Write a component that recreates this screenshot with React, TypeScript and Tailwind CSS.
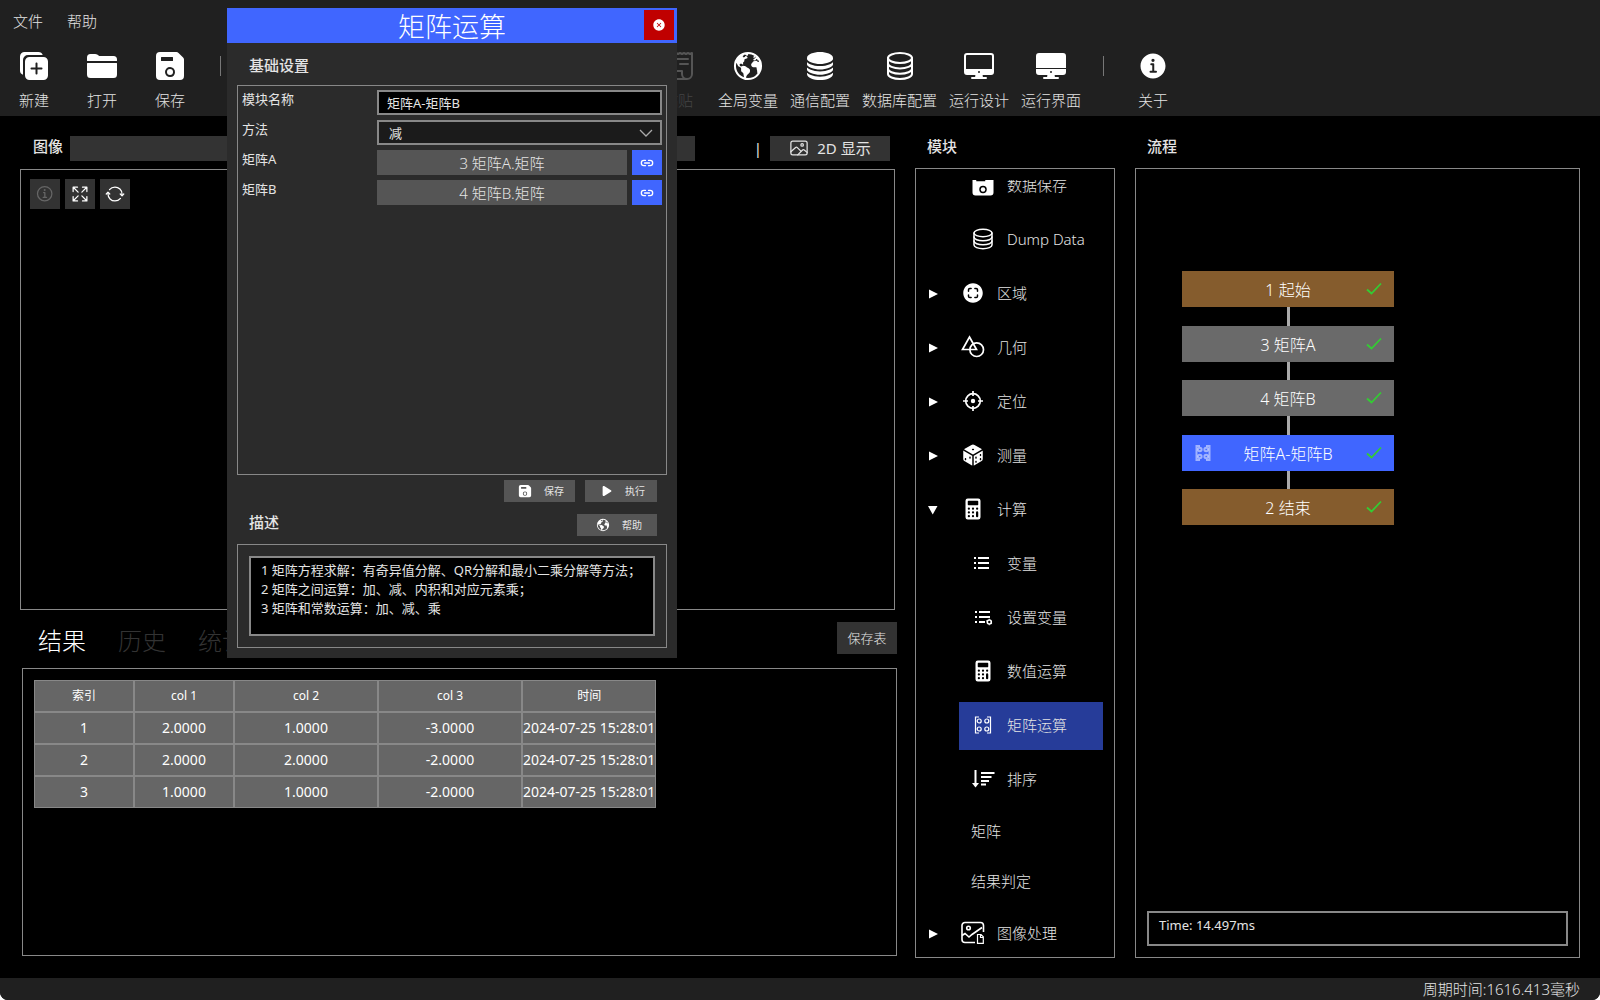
import React, { useState } from 'react';
import {
  IoCalculator,
  IoCloseCircle,
  IoDesktop,
  IoDesktopOutline,
  IoDice,
  IoDuplicate,
  IoEarth,
  IoExpandOutline,
  IoFolder,
  IoImageOutline,
  IoInformationCircle,
  IoInformationCircleOutline,
  IoLink,
  IoPlay,
  IoReceiptOutline,
  IoSave,
  IoScanCircle,
  IoServer,
  IoServerOutline,
  IoSyncOutline,
} from 'react-icons/io5';

type IconType = React.ComponentType<{ className?: string }>;

/* ---------- Icons ---------- */

const ShapesIcon: IconType = ({ className }) => (
  <svg viewBox="0 0 24 24" fill="none" stroke="currentColor" strokeWidth="1.7" className={className}>
    <path d="M8.5 2 L15.5 14.500 H1.5 Z" />
    <circle cx="15.7" cy="14.7" r="6.8" />
  </svg>
);

const TargetIcon: IconType = ({ className }) => (
  <svg viewBox="0 0 24 24" fill="none" stroke="currentColor" strokeWidth="1.7" className={className}>
    <circle cx="12" cy="12" r="7.3" />
    <path d="M12 2v5M12 17v5M2 12h5M17 12h5" />
    <circle cx="12" cy="12" r="2.2" fill="currentColor" stroke="none" />
  </svg>
);

const ListIcon: IconType = ({ className }) => (
  <svg viewBox="0 0 24 24" fill="currentColor" className={className}>
    <path d="M3 6h2v2H3zM3 11h2v2H3zM3 16h2v2H3zM7 6h11v2H7zM7 11h11v2H7zM7 16h11v2H7z" />
  </svg>
);

const ListSettingIcon: IconType = ({ className }) => (
  <svg viewBox="0 0 24 24" fill="currentColor" className={className}>
    <path d="M4 6h2v2H4zM4 11h2v2H4zM4 16h2v2H4zM8 6h11v2H8zM8 11h11v2H8zM8 16h6v2H8z" />
    <circle cx="18.3" cy="17" r="2" fill="none" stroke="currentColor" strokeWidth="1.6" />
    <path d="M17.8 13.8h1v1h-1zM17.8 19.2h1v1h-1zM15.4 15.2l.9.5-.4.7-.9-.5zM20.3 18l.9.5-.4.7-.9-.5z" />
  </svg>
);

const MatrixIcon: IconType = ({ className }) => (
  <svg viewBox="0 0 24 24" fill="none" stroke="currentColor" strokeWidth="1.2" className={className}>
    <path d="M8 4H4.500v16H8M16 4h3.500v16H16" />
    <circle cx="8.200" cy="8" r="2" />
    <circle cx="15.800" cy="8" r="2" />
    <circle cx="8.200" cy="16" r="2" />
    <circle cx="15.800" cy="16" r="2" />
  </svg>
);

/* Heavier variant used inside the flow nodes */
const MatrixBoldIcon: IconType = ({ className }) => (
  <svg viewBox="0 0 24 24" fill="none" stroke="currentColor" strokeWidth="2" className={className}>
    <path d="M9 5H5.500v14H9M15 5h3.500v14H15" />
    <circle cx="8.800" cy="8.500" r="1.800" />
    <circle cx="15.200" cy="8.500" r="1.800" />
    <circle cx="8.800" cy="15.500" r="1.800" />
    <circle cx="15.200" cy="15.500" r="1.800" />
  </svg>
);

const SortIcon: IconType = ({ className }) => (
  <svg viewBox="0 0 24 24" fill="none" stroke="currentColor" strokeWidth="2" className={className}>
    <path d="M4.500 3v15" />
    <path d="M1 16h7l-3.500 4.500z" fill="currentColor" stroke="none" />
    <path d="M10 6h13.500M10 10h10.500M10 14h8M10 17.500h5" />
  </svg>
);

const ImageProcessIcon: IconType = ({ className }) => (
  <svg viewBox="0 0 24 24" fill="none" stroke="currentColor" strokeWidth="1.6" className={className}>
    <path d="M14 21.500H4A3 3 0 0 1 1 18.500V4.500A3 3 0 0 1 4 1.500H19.500A3 3 0 0 1 22.500 4.500V11" />
    <circle cx="7.500" cy="7" r="1.800" />
    <path d="M1 14.500l3-2 4 3.500 3-2.500 10-7" />
    <path d="M16.500 13.500h3.500l2.300 2.300v6.500h-5.800zM19.500 13.500v3h2.800" strokeWidth="1.200" />
  </svg>
);

const CheckIcon: IconType = ({ className }) => (
  <svg viewBox="0 0 16 14" fill="none" stroke="currentColor" strokeWidth="1.800" className={className}>
    <path d="M1 7.500l4.500 4L15 1.500" />
  </svg>
);

const ChevronIcon: IconType = ({ className }) => (
  <svg viewBox="0 0 14 8" fill="none" stroke="currentColor" strokeWidth="1.300" className={className}>
    <path d="M1 1l6 6 6-6" />
  </svg>
);

/* ---------- Data ---------- */

interface Tool {
  label: string;
  icon: IconType;
  disabled?: boolean;
}

const fileTools: Tool[] = [
  { label: '新建', icon: IoDuplicate },
  { label: '打开', icon: IoFolder },
  { label: '保存', icon: IoSave },
];

const projectTools: Tool[] = [
  { label: '粘贴', icon: IoReceiptOutline, disabled: true },
  { label: '全局变量', icon: IoEarth },
  { label: '通信配置', icon: IoServer },
  { label: '数据库配置', icon: IoServerOutline },
  { label: '运行设计', icon: IoDesktopOutline },
  { label: '运行界面', icon: IoDesktop },
];

interface TreeItem {
  label: string;
  icon?: IconType;
  group?: boolean;
  open?: boolean;
}

const treeItems: TreeItem[] = [
  { label: '数据保存', icon: IoSave },
  { label: 'Dump Data', icon: IoServerOutline },
  { label: '区域', icon: IoScanCircle, group: true },
  { label: '几何', icon: ShapesIcon, group: true },
  { label: '定位', icon: TargetIcon, group: true },
  { label: '测量', icon: IoDice, group: true },
  { label: '计算', icon: IoCalculator, group: true, open: true },
  { label: '变量', icon: ListIcon },
  { label: '设置变量', icon: ListSettingIcon },
  { label: '数值运算', icon: IoCalculator },
  { label: '矩阵运算', icon: MatrixIcon },
  { label: '排序', icon: SortIcon },
  { label: '矩阵' },
  { label: '结果判定' },
  { label: '图像处理', icon: ImageProcessIcon, group: true },
];

const flowNodes = [
  { label: '1 起始', color: 'bg-[#855c2d]' },
  { label: '3 矩阵A', color: 'bg-[#6a6a6a]' },
  { label: '4 矩阵B', color: 'bg-[#6a6a6a]' },
  { label: '矩阵A-矩阵B', color: 'bg-[#4066ff]', active: true },
  { label: '2 结束', color: 'bg-[#855c2d]' },
];

const columns = [
  { title: '索引', width: 'w-[100px]' },
  { title: 'col 1', width: 'w-[100px]' },
  { title: 'col 2', width: 'w-[144px]' },
  { title: 'col 3', width: 'w-[144px]' },
  { title: '时间', width: 'w-[134px]' },
];

const rows = [
  ['1', '2.0000', '1.0000', '-3.0000', '2024-07-25 15:28:01'],
  ['2', '2.0000', '2.0000', '-2.0000', '2024-07-25 15:28:01'],
  ['3', '1.0000', '1.0000', '-2.0000', '2024-07-25 15:28:01'],
];

const description = `1 矩阵方程求解：有奇异值分解、QR分解和最小二乘分解等方法；
2 矩阵之间运算：加、减、内积和对应元素乘；
3 矩阵和常数运算：加、减、乘`;

/* ---------- Header ---------- */

const ToolButton: React.FC<{ tool: Tool }> = ({ tool }) => {
  const Icon = tool.icon;
  return (
    <button
      disabled={tool.disabled}
      className="flex min-w-14 shrink-0 flex-col items-center gap-2 disabled:text-[#444]"
    >
      <Icon className={`h-8 w-8 ${tool.disabled ? 'text-[#555]' : 'text-white'}`} />
      <span className="leading-5">{tool.label}</span>
    </button>
  );
};

const Header: React.FC = () => (
  <header className="h-[116px] overflow-hidden bg-[#202020] font-light">
    <nav className="flex h-[42px] items-center gap-6 px-[13px]">
      <button>文件</button>
      <button>帮助</button>
    </nav>
    <div className="flex items-start pl-[6px] pt-2">
      <div className="flex gap-3">
        {fileTools.map((tool) => (
          <ToolButton key={tool.label} tool={tool} />
        ))}
      </div>
      <div className="ml-[22px] mt-[6px] h-5 w-px shrink-0 bg-[#777]" />
      <div className="ml-[429px] flex gap-3">
        {projectTools.map((tool) => (
          <ToolButton key={tool.label} tool={tool} />
        ))}
      </div>
      <div className="ml-[22px] mr-[21px] mt-[6px] h-5 w-px shrink-0 bg-[#777]" />
      <ToolButton tool={{ label: '关于', icon: IoInformationCircle }} />
    </div>
  </header>
);

/* ---------- Image + results ---------- */

const ImagePanel: React.FC = () => (
  <section className="mr-[2px]">
    <div className="flex h-[53px] items-center pl-[13px] pr-[5px] pt-[11px]">
      <label htmlFor="image-source" className="mb-1 w-[37px] font-medium">图像</label>
      <input id="image-source" readOnly className="h-[25px] w-[625px] bg-[#333] px-2 outline-none" />
      <span className="ml-auto mr-2">|</span>
      <button className="flex h-[25px] w-[120px] items-center justify-center gap-2 bg-[#333]">
        <IoImageOutline className="h-5 w-5" />
        2D 显示
      </button>
    </div>
    <div className="flex h-[441px] items-start gap-[5px] border border-[#888] p-[9px]">
      <button disabled aria-label="信息" className="flex h-[30px] w-[30px] items-center justify-center bg-[#333] text-[#666]">
        <IoInformationCircleOutline className="h-5 w-5" />
      </button>
      <button aria-label="适应窗口" className="flex h-[30px] w-[30px] items-center justify-center bg-[#333] text-white">
        <IoExpandOutline className="h-5 w-5" />
      </button>
      <button aria-label="刷新" className="flex h-[30px] w-[30px] items-center justify-center bg-[#333] text-white">
        <IoSyncOutline className="h-5 w-5" />
      </button>
    </div>
  </section>
);

const ResultPanel: React.FC = () => {
  const [tab, setTab] = useState('结果');

  return (
    <section className="mb-[2px] ml-[2px] flex flex-1 flex-col">
      <div className="flex h-[58px] items-center justify-between">
        <div className="flex pt-1 text-2xl font-light">
          {['结果', '历史', '统计'].map((name) => (
            <button
              key={name}
              onClick={() => setTab(name)}
              className={`w-20 text-center ${tab === name ? 'text-white' : 'text-[#333]'}`}
            >
              {name}
            </button>
          ))}
        </div>
        <button className="mb-[2px] h-8 w-[60px] bg-[#333] text-[13px] font-light">保存表</button>
      </div>
      <div className="flex-1 border border-[#888] p-[11px]">
        <table className="table-fixed border-separate border-spacing-0 bg-[#666] text-center text-white">
          <thead>
            <tr className="h-8">
              {columns.map((col) => (
                <th key={col.title} className={`${col.width} border border-[#888] p-0 text-xs font-normal`}>
                  {col.title}
                </th>
              ))}
            </tr>
          </thead>
          <tbody>
            {rows.map((row) => (
              <tr key={row[0]} className="h-8">
                {row.map((cell, i) => (
                  <td key={i} className="whitespace-nowrap border border-[#888] p-0 text-sm">
                    {cell}
                  </td>
                ))}
              </tr>
            ))}
          </tbody>
        </table>
      </div>
    </section>
  );
};

/* ---------- Module tree ---------- */

const ModuleTree: React.FC = () => {
  const [selected, setSelected] = useState('矩阵运算');

  return (
    <section className="ml-[18px] flex w-[200px] shrink-0 flex-col">
      <h2 className="h-[52px] pl-3 pt-5 font-medium">模块</h2>
      <div className="h-[790px] border border-[#888] p-[11px] font-light">
        <div className="h-full overflow-hidden">
          {/* List is scrolled part of a row down */}
          <ul className="-mt-[18px] flex flex-col gap-[6px]">
            {treeItems.map((item) => {
              const Icon = item.icon;
              return (
                <li key={item.label} className={`flex shrink-0 items-center ${item.group ? '' : 'pl-8'}`}>
                  {item.group && (
                    <svg viewBox="0 0 22 12" className="h-3 w-[22px] text-white" fill="currentColor">
                      <path d={item.open ? 'M1 2h9.500L5.700 10.500z' : 'M2 1.500v9l9-4.500z'} />
                    </svg>
                  )}
                  <button
                    onClick={() => setSelected(item.label)}
                    className={`flex flex-1 items-center gap-3 px-3 pb-[2px] text-left ${Icon ? 'h-12' : 'h-11'} ${
                      selected === item.label ? 'bg-[#263c99]' : ''
                    }`}
                  >
                    {Icon && <Icon className="h-6 w-6 shrink-0 text-white" />}
                    {item.label}
                  </button>
                </li>
              );
            })}
          </ul>
        </div>
      </div>
    </section>
  );
};

/* ---------- Flow ---------- */

const FlowPanel: React.FC = () => (
  <section className="ml-5 flex w-[445px] shrink-0 flex-col">
    <h2 className="h-[52px] pl-3 pt-5 font-medium">流程</h2>
    <div className="flex h-[790px] flex-col justify-between border border-[#888] p-[11px]">
      <div className="ml-[35px] flex w-[212px] flex-col items-center pt-[91px] text-base font-light">
        {flowNodes.map((node, i) => (
          <React.Fragment key={node.label}>
            {i > 0 && <div className={`w-[3px] bg-[#aaa] ${i % 2 ? 'h-[19px]' : 'h-[18px]'}`} />}
            <button className={`grid h-9 w-full grid-cols-[42px_1fr_42px] items-center text-white ${node.color}`}>
              {node.active ? <MatrixBoldIcon className="ml-[9px] h-6 w-6 text-white/50" /> : <span />}
              <span className="pt-[2px]">{node.label}</span>
              <CheckIcon className="ml-[14px] h-[14px] w-4 text-[#33cc33]" />
            </button>
          </React.Fragment>
        ))}
      </div>
      <div className="h-[35px] border-2 border-[#888] px-[10px] py-[2px] text-[13px] leading-5">Time: 14.497ms</div>
    </div>
  </section>
);

/* ---------- Matrix dialog ---------- */

const SmallButton: React.FC<{ icon: IconType; label: string; className: string }> = ({ icon: Icon, label, className }) => (
  <button className={`flex h-[22px] items-center bg-[#555] text-[10px] ${className}`}>
    <Icon className="h-[14px] w-[14px] text-white" />
    {label}
  </button>
);

const MatrixDialog: React.FC = () => {
  const [name, setName] = useState('矩阵A-矩阵B');
  const [method, setMethod] = useState('减');

  return (
    <div role="dialog" aria-labelledby="dialog-title" className="absolute left-[227px] top-2 h-[650px] w-[450px] bg-[#2b2b2b] px-[10px]">
      <div className="-mx-[10px] grid h-[35px] grid-cols-[33px_1fr_33px] items-center bg-[#4066ff]">
        <h1 id="dialog-title" className="col-start-2 pt-[2px] text-center text-[27px] font-light leading-8 text-white">
          矩阵运算
        </h1>
        <button aria-label="关闭" className="mb-px flex h-[30px] w-[30px] items-center justify-center bg-[#c00000] text-white">
          <IoCloseCircle className="h-[14px] w-[14px]" />
        </button>
      </div>

      <h2 className="h-[42px] pl-3 pt-3 font-medium">基础设置</h2>
      <div className="grid h-[390px] auto-rows-[25px] grid-cols-[135px_1fr_30px] gap-y-[5px] border border-[#888] p-1 text-[13px]">
        <label htmlFor="module-name" className="leading-[18px]">模块名称</label>
        <input
          id="module-name"
          value={name}
          onChange={(e) => setName(e.target.value)}
          className="col-span-2 border-2 border-[#888] bg-black px-2 text-[13px] outline-none"
        />

        <label htmlFor="method" className="leading-[18px]">方法</label>
        <div className="relative col-span-2">
          <select
            id="method"
            value={method}
            onChange={(e) => setMethod(e.target.value)}
            className="h-[25px] w-full appearance-none border-2 border-[#888] bg-[#1b1b1b] px-[10px] text-[13px] outline-none"
          >
            <option>减</option>
          </select>
          <ChevronIcon className="pointer-events-none absolute right-[9px] top-[9px] h-2 w-[14px] text-[#aaa]" />
        </div>

        {[
          { label: '矩阵A', value: '3 矩阵A.矩阵', id: 'matrix-a' },
          { label: '矩阵B', value: '4 矩阵B.矩阵', id: 'matrix-b' },
        ].map((field) => (
          <React.Fragment key={field.id}>
            <label htmlFor={field.id} className="leading-[18px]">{field.label}</label>
            <button id={field.id} className="mr-[5px] bg-[#555] text-[15px] font-light">{field.value}</button>
            <button aria-label={`链接${field.label}`} className="flex items-center justify-center bg-[#4066ff] text-white">
              <IoLink className="h-[14px] w-[14px]" />
            </button>
          </React.Fragment>
        ))}
      </div>

      <div className="mt-[5px] flex justify-end gap-[10px] pr-[10px]">
        <SmallButton icon={IoSave} label="保存" className="w-[71px] gap-3 pl-[14px]" />
        <SmallButton icon={IoPlay} label="执行" className="w-[72px] gap-[11px] pl-[15px]" />
      </div>
      <div className="mt-3 flex h-[30px] items-start justify-between pl-3 pr-[10px]">
        <h2 className="font-medium leading-4">描述</h2>
        <SmallButton icon={IoEarth} label="帮助" className="w-20 gap-3 pl-[19px]" />
      </div>
      <div className="h-[104px] border border-[#888] p-[11px]">
        <textarea
          readOnly
          aria-label="描述"
          value={description}
          className="block h-20 w-full resize-none overflow-hidden border-2 border-[#888] bg-black px-[10px] py-[3px] text-[13px] leading-[19px] outline-none"
        />
      </div>
    </div>
  );
};

export default function App() {
  return (
    <div
      lang="zh-CN"
      className="relative flex min-h-screen flex-col overflow-hidden rounded-b-lg bg-black font-['Noto_Sans','Noto_Sans_CJK_SC',sans-serif] text-[15px] leading-5 text-[#e4e4e4]"
    >
      <Header />
      <main className="flex flex-1 px-5 pb-5">
        <div className="flex min-w-0 flex-1 flex-col">
          <ImagePanel />
          <ResultPanel />
        </div>
        <ModuleTree />
        <FlowPanel />
      </main>
      <footer className="flex h-[22px] items-center justify-end bg-[#202020] px-5 font-light">周期时间:1616.413毫秒</footer>
      <MatrixDialog />
    </div>
  );
}
